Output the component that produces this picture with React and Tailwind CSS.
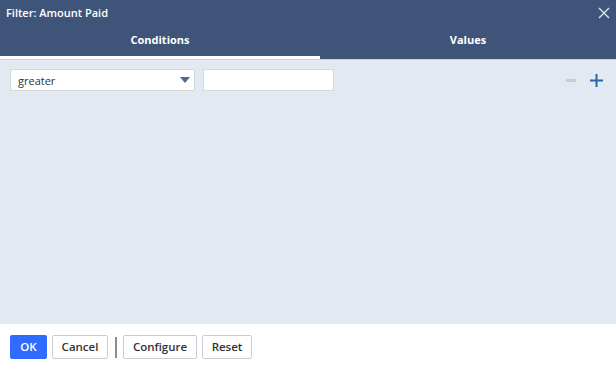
import React from "react";

export default function App() {
  const font = { fontFamily: '"Open Sans", "Noto Sans", sans-serif' };
  return (
    <div
      className="w-[616px] h-[370px] flex flex-col bg-white overflow-hidden"
      style={font}
    >
      <div className="bg-[#3e5479] text-white flex flex-col">
        <div className="h-[25px] flex items-center justify-between pl-[6px] pr-[6px]">
          <span className="text-[11px] font-semibold leading-none">Filter: Amount Paid</span>
          <svg width="12" height="12" viewBox="0 0 12 12">
            <path d="M1 1 L11 11 M11 1 L1 11" stroke="#dfe6f0" strokeWidth="1.4" />
          </svg>
        </div>
        <div className="flex h-[34px]">
          <div className="w-[320px] flex items-center justify-center border-b-[3px] border-white text-[11px] font-bold">
            Conditions
          </div>
          <div className="flex-1 flex items-center justify-center border-b-[3px] border-transparent text-[11px] font-bold">
            Values
          </div>
        </div>
      </div>
      <div className="flex-1 bg-[#e3e9f1] border-t border-[#c9d3e0] pt-[9px] pl-[10px] pr-[13px]">
        <div className="flex items-center">
          <div className="w-[185px] h-[22px] bg-white border border-[#d3d8de] rounded-[2px] flex items-center justify-between pl-[7px] pr-[4px]">
            <span className="text-[11px] text-[#333] leading-none">greater</span>
            <svg width="10" height="6" viewBox="0 0 10 6">
              <path d="M0 0 H10 L5 6 Z" fill="#4f6a94" />
            </svg>
          </div>
          <div className="ml-[8px] w-[131px] h-[22px] bg-white border border-[#d3d8de] rounded-[2px]" />
          <div className="flex-1" />
          <div className="w-[10px] h-[3px] bg-[#c5ccd5] mr-[14px]" />
          <svg width="13" height="13" viewBox="0 0 13 13">
            <path d="M6.5 0 V13 M0 6.5 H13" stroke="#2a67a8" strokeWidth="2" />
          </svg>
        </div>
      </div>
      <div className="h-[46px] bg-white flex items-center pl-[10px] gap-[5px]">
        <button className="h-[24px] w-[37px] bg-[#2f6bff] text-white text-[11.5px] font-semibold rounded-[2px]">
          OK
        </button>
        <button className="h-[24px] w-[56px] bg-white border border-[#c8cdd3] text-[#333] text-[11.5px] font-semibold rounded-[2px]">
          Cancel
        </button>
        <div className="w-[2px] h-[21px] bg-[#8c8c8c] ml-[2px] mr-[1px]" />
        <button className="h-[24px] w-[74px] bg-white border border-[#c8cdd3] text-[#333] text-[11.5px] font-semibold rounded-[2px]">
          Configure
        </button>
        <button className="h-[24px] w-[50px] bg-white border border-[#c8cdd3] text-[#333] text-[11.5px] font-semibold rounded-[2px]">
          Reset
        </button>
      </div>
    </div>
  );
}
